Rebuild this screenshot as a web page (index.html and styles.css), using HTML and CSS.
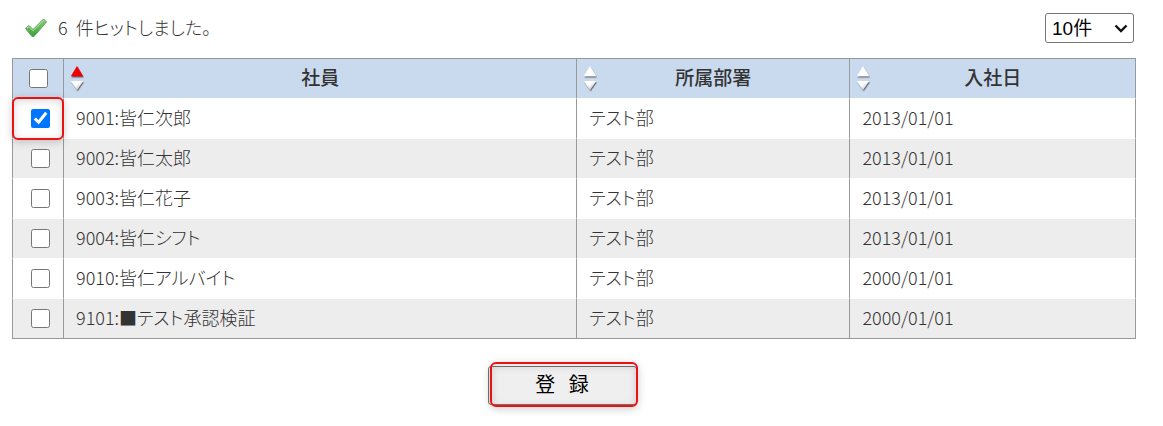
FILE: index.html
```html
<!DOCTYPE html>
<html lang="ja">

<head>
    <meta charset="UTF-8">
    <meta name="viewport" content="width=device-width, initial-scale=1.0">
    <title>社員検索</title>
    <link rel="stylesheet" href="styles.css">
</head>

<body>
    <svg class="defs" width="0" height="0" aria-hidden="true">
        <defs>
            <linearGradient id="checkFill" x1="0" y1="0" x2="0" y2="1">
                <stop offset="0" stop-color="#8fd07f" />
                <stop offset="1" stop-color="#3f9c3c" />
            </linearGradient>
            <linearGradient id="arrowFill" x1="0" y1="0" x2="1" y2="1">
                <stop offset="0.4" stop-color="#ffffff" />
                <stop offset="1" stop-color="#b4b4b4" />
            </linearGradient>
            <filter id="arrowShadow" x="-30%" y="-30%" width="170%" height="170%">
                <feDropShadow dx="0.6" dy="1.2" stdDeviation="0.7" flood-color="#333" flood-opacity="0.8" />
            </filter>
            <symbol id="sort" viewBox="0 0 16 28">
                <g filter="url(#arrowShadow)">
                    <path d="M7 1 L13.2 11.3 H0.8 Z" />
                    <path d="M0.8 16 H13.2 L7 25 Z" fill="url(#arrowFill)" />
                </g>
            </symbol>
        </defs>
    </svg>
    <form class="container">
        <div class="toolbar">
            <div class="message">
                <svg class="check-icon" viewBox="0 0 24 20" aria-hidden="true">
                    <path d="M1.5 10.5 L5 7.5 L9 11.5 L19.5 1 L22.5 4 L10 18.5 H8 Z" fill="url(#checkFill)" stroke="#58a853" stroke-width="1" stroke-linejoin="round" />
                    <path d="M3 10 L5 8.7 L9 12.8 L19.5 2.4" fill="none" stroke="#b2e2a4" stroke-width="1" />
                </svg>
                <p><span class="count">6</span>件ヒットしました。</p>
            </div>
            <div class="page-size">
                <select aria-label="表示件数">
                    <option>10件</option>
                </select>
                <svg viewBox="0 0 14 9" aria-hidden="true"><path d="M1.5 1.5 L7 7 L12.5 1.5" fill="none" stroke="#111" stroke-width="2.4" /></svg>
            </div>
        </div>
        <table class="list">
            <colgroup>
                <col class="col-check">
                <col class="col-name">
                <col class="col-dept">
                <col class="col-date">
            </colgroup>
            <thead>
                <tr>
                    <th class="check-cell"><input type="checkbox" aria-label="すべて選択"></th>
                    <th><svg class="sort-icon asc" aria-hidden="true"><use href="#sort" /></svg>社員</th>
                    <th><svg class="sort-icon" aria-hidden="true"><use href="#sort" /></svg>所属部署</th>
                    <th><svg class="sort-icon" aria-hidden="true"><use href="#sort" /></svg>入社日</th>
                </tr>
            </thead>
            <tbody>
                <tr>
                    <td class="check-cell marked"><input type="checkbox" id="e9001" checked></td>
                    <td><label for="e9001">9001:皆仁次郎</label></td>
                    <td>テスト部</td>
                    <td>2013/01/01</td>
                </tr>
                <tr>
                    <td class="check-cell"><input type="checkbox" id="e9002"></td>
                    <td><label for="e9002">9002:皆仁太郎</label></td>
                    <td>テスト部</td>
                    <td>2013/01/01</td>
                </tr>
                <tr>
                    <td class="check-cell"><input type="checkbox" id="e9003"></td>
                    <td><label for="e9003">9003:皆仁花子</label></td>
                    <td>テスト部</td>
                    <td>2013/01/01</td>
                </tr>
                <tr>
                    <td class="check-cell"><input type="checkbox" id="e9004"></td>
                    <td><label for="e9004">9004:皆仁シフト</label></td>
                    <td>テスト部</td>
                    <td>2013/01/01</td>
                </tr>
                <tr>
                    <td class="check-cell"><input type="checkbox" id="e9010"></td>
                    <td><label for="e9010">9010:皆仁アルバイト</label></td>
                    <td>テスト部</td>
                    <td>2000/01/01</td>
                </tr>
                <tr>
                    <td class="check-cell"><input type="checkbox" id="e9101"></td>
                    <td><label for="e9101">9101:■テスト承認検証</label></td>
                    <td>テスト部</td>
                    <td>2000/01/01</td>
                </tr>
            </tbody>
        </table>
        <div class="actions">
            <button type="submit" class="submit-btn marked">登&nbsp;&nbsp;&nbsp;録</button>
        </div>
    </form>
</body>

</html>
```

FILE: styles.css
```css
body {
    margin: 0;
    background-color: #fff;
    color: #333;
    font-family: "Noto Sans CJK JP", sans-serif;
    font-size: 18px;
    font-weight: 300;
    line-height: 26px;
    font-feature-settings: "palt";
}

.defs {
    position: absolute;
}

.container {
    padding: 13px 27px 20px 12px;
}

.toolbar {
    display: flex;
    justify-content: space-between;
    align-items: center;
    margin-bottom: 15px;
    padding: 0 2px 0 12px;
}

.message {
    display: flex;
    align-items: center;
    gap: 10px;
}

.message p {
    margin: 0 0 3px;
}

.count {
    margin-right: 8px;
}

.check-icon {
    width: 24px;
    height: 20px;
}

.page-size {
    position: relative;
}

.page-size select {
    display: block;
    appearance: none;
    width: 89px;
    height: 30px;
    padding: 0 6px;
    border: 1px solid #767676;
    border-radius: 3px;
    background-color: #fff;
    color: #000;
    font-family: "Liberation Sans", "Noto Sans CJK JP", sans-serif;
    font-size: 19px;
}

.page-size svg {
    position: absolute;
    top: 11px;
    right: 6px;
    width: 14px;
    height: 9px;
    pointer-events: none;
}

.list {
    width: 100%;
    table-layout: fixed;
    border-collapse: separate;
    border-spacing: 0;
}

.col-check {
    width: 51px;
}

.col-dept {
    width: 24.3%;
}

.col-date {
    width: 25.5%;
}

th,
td {
    box-sizing: border-box;
    position: relative;
    height: 40px;
    padding: 0 12px 3px;
    border-left: 1px solid #999;
    border-bottom: 1px solid #fff;
    text-align: left;
}

th {
    height: 41px;
    border-top: 1px solid #999;
    background-color: #c9d9ee;
    font-size: 19px;
    font-weight: 500;
    font-feature-settings: normal;
    text-align: center;
}

th:last-child,
td:last-child {
    border-right: 1px solid #999;
}

tbody tr:nth-child(even) {
    background-color: #ededed;
}

tbody tr:last-child td {
    border-bottom-color: #999;
}

.check-cell {
    padding: 0;
    text-align: center;
}

td.check-cell {
    padding-left: 5px;
}

.check-cell input {
    display: block;
    width: 19px;
    height: 19px;
    margin: 0 auto;
}

.sort-icon {
    position: absolute;
    left: 6px;
    top: 6px;
    width: 16px;
    height: 28px;
    fill: #fff;
}

.sort-icon.asc {
    fill: #f00000;
}

.actions {
    margin-top: 27px;
    padding-right: 24px;
    text-align: center;
}

.submit-btn {
    position: relative;
    width: 149px;
    height: 39px;
    padding: 0 0 5px;
    border: 1px solid #767676;
    border-radius: 3px;
    background-color: #efefef;
    color: #000;
    font-family: inherit;
    font-size: 20px;
    font-weight: 400;
}

/* red frame around the items to operate */
.marked::after {
    content: "";
    position: absolute;
    z-index: 1;
    inset: -2px -1px;
    border: 2px solid #ee1111;
    border-radius: 6px;
    box-shadow: 0 2px 8px rgba(0, 0, 0, 0.2), inset 0 2px 8px rgba(0, 0, 0, 0.15);
    pointer-events: none;
}

.submit-btn.marked::after {
    inset: -5px -2px -3px 1px;
}
```
